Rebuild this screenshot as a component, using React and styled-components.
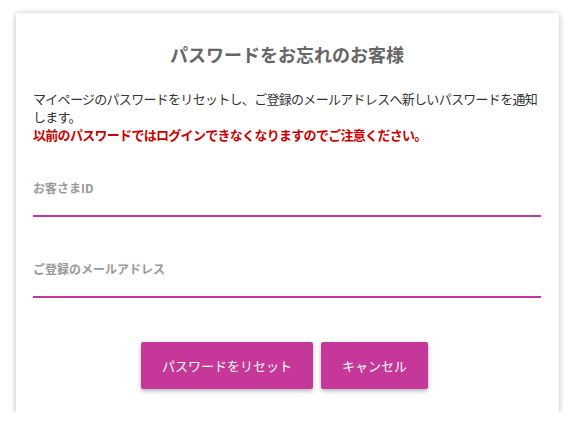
import styled, { createGlobalStyle } from "styled-components";

const GlobalStyle = createGlobalStyle`
  body {
    margin: 0;
    background: #fff;
    font-family: "Noto Sans CJK JP", "Noto Sans", sans-serif;
  }
`;

const Card = styled.div`
  width: 543px;
  margin: 13px 0 0 16px;
  box-sizing: border-box;
  padding: 28px 18px 23px 17px;
  background: #fff;
  box-shadow: 0 1px 6px rgba(0, 0, 0, 0.28);
`;

const Title = styled.h2`
  margin: 0 0 23px;
  text-align: center;
  font-size: 18px;
  line-height: 26px;
  font-weight: 700;
  color: #666;
`;

const Lead = styled.p`
  margin: 0;
  font-size: 13px;
  line-height: 18px;
  letter-spacing: -0.7px;
  color: #333;
  white-space: nowrap;
`;

const Warning = styled.strong`
  display: block;
  color: #cc0000;
  font-weight: 700;
`;

const Field = styled.div`
  margin-top: ${(props) => props.gap}px;
  display: flex;
  flex-direction: column;
`;

const Label = styled.label`
  font-size: 12px;
  line-height: 18px;
  font-weight: 700;
  color: #999;
`;

const Input = styled.input`
  height: 20px;
  box-sizing: border-box;
  border: none;
  border-bottom: 2px solid #c8359a;
  outline: 0;
  padding: 0;
  font-size: 13px;
  background: transparent;
`;

const Actions = styled.div`
  margin-top: 44px;
  display: flex;
  justify-content: center;
  gap: 8px;
  padding-right: 5px;
`;

const Button = styled.button`
  height: 47px;
  padding: 0 21px;
  border: none;
  border-radius: 2px;
  background: #c5389a;
  color: #fff;
  font-family: inherit;
  font-size: 13px;
  cursor: pointer;
  box-shadow: 0 2px 4px rgba(0, 0, 0, 0.3);
`;

const App = () => {
  return (
    <>
      <GlobalStyle />
      <Card>
        <Title>パスワードをお忘れのお客様</Title>
        <Lead>
          マイページのパスワードをリセットし、ご登録のメールアドレスへ新しいパスワードを通知
          <br />
          します。
          <Warning>以前のパスワードではログインできなくなりますのでご注意ください。</Warning>
        </Lead>
        <Field gap={35}>
          <Label htmlFor="customer-id">お客さまID</Label>
          <Input id="customer-id" type="text" />
        </Field>
        <Field gap={43}>
          <Label htmlFor="email">ご登録のメールアドレス</Label>
          <Input id="email" type="email" />
        </Field>
        <Actions>
          <Button type="button">パスワードをリセット</Button>
          <Button type="button">キャンセル</Button>
        </Actions>
      </Card>
    </>
  );
};

export default App;
